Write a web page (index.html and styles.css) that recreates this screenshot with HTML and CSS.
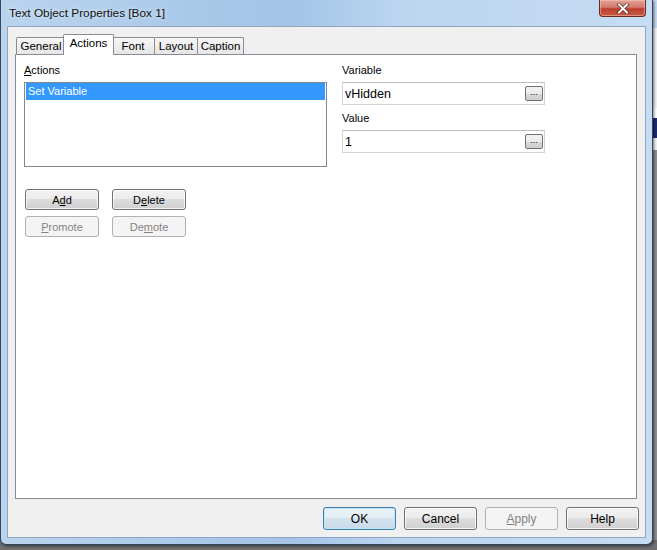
FILE: index.html
```html
<!DOCTYPE html>
<html>
<head>
<meta charset="utf-8">
<title>Text Object Properties [Box 1]</title>
<link rel="stylesheet" href="styles.css">
</head>
<body>
<div class="backdrop"></div>
<div class="window">
  <div class="titlebar">
    <div class="title">Text Object Properties [Box 1]</div>
    <div class="close">
      <svg width="14" height="11" viewBox="0 0 14 11">
        <path d="M3 1.5 L11 9.5 M11 1.5 L3 9.5" stroke="#5a2318" stroke-width="3.4" stroke-linecap="square" fill="none"/>
        <path d="M3 1.5 L11 9.5 M11 1.5 L3 9.5" stroke="#ffffff" stroke-width="2" stroke-linecap="square" fill="none"/>
      </svg>
    </div>
  </div>
  <div class="client">
    <div class="tabs">
      <div class="tab tab--general">General</div>
      <div class="tab tab--actions tab--active">Actions</div>
      <div class="tab tab--font">Font</div>
      <div class="tab tab--layout">Layout</div>
      <div class="tab tab--caption">Caption</div>
    </div>
    <div class="panel">
      <div class="col-left">
        <div class="label"><u>A</u>ctions</div>
        <div class="listbox">
          <div class="list-item list-item--selected">Set Variable</div>
        </div>
        <div class="btn-row btn-row--first">
          <div class="btn">A<u>d</u>d</div>
          <div class="btn">D<u>e</u>lete</div>
        </div>
        <div class="btn-row">
          <div class="btn btn--disabled"><u>P</u>romote</div>
          <div class="btn btn--disabled">De<u>m</u>ote</div>
        </div>
      </div>
      <div class="col-right">
        <div class="label">Variable</div>
        <div class="field field--spaced">
          <span class="field-text">vHidden</span>
          <span class="dots">...</span>
        </div>
        <div class="label">Value</div>
        <div class="field">
          <span class="field-text">1</span>
          <span class="dots">...</span>
        </div>
      </div>
    </div>
    <div class="footer">
      <div class="btn btn--footer btn--default">OK</div>
      <div class="btn btn--footer">Cancel</div>
      <div class="btn btn--footer btn--disabled"><u>A</u>pply</div>
      <div class="btn btn--footer">Help</div>
    </div>
  </div>
</div>
</body>
</html>
```
FILE: styles.css
```css
* { box-sizing: border-box; }
html, body { margin: 0; padding: 0; }
body {
  width: 657px;
  height: 550px;
  overflow: hidden;
  background: #6f6f6f;
  font-family: "Liberation Sans", Arial, sans-serif;
  font-size: 11px;
  color: #000;
  position: relative;
}
.backdrop {
  position: absolute;
  left: 600px;
  top: 0;
  width: 57px;
  height: 550px;
  background: linear-gradient(#c4daf0 0 28px, #f2f2f2 28px 108px, #ffffff 108px 118px, #1b2a6e 118px 138px, #f2f2f2 138px 150px, #8e8e8e 150px 540px, #6f6f6f 540px);
}
.window {
  position: relative;
  width: 653px;
  height: 545px;
  border: 1px solid #33465c;
  border-top: 0;
  border-radius: 0 0 6px 6px;
  padding: 0 6px 6px 6px;
  background: linear-gradient(90deg, #bad4ee 0%, #a9c8e8 30%, #a4c4e6 45%, #bcd6f0 62%, #c5dcf2 100%);
  display: flex;
  flex-direction: column;
  box-shadow: 1px 1px 3px rgba(0, 0, 0, 0.55);
}
.titlebar {
  height: 26px;
  display: flex;
  align-items: flex-start;
  flex-shrink: 0;
}
.title {
  padding: 6px 0 0 2px;
  font-size: 11.8px;
  line-height: 14px;
  color: #111;
  text-shadow: 0 0 5px rgba(255, 255, 255, 0.8);
}
.close {
  margin-left: auto;
  width: 47px;
  height: 17px;
  border: 1px solid #6b2a20;
  border-top: 0;
  border-radius: 0 0 4px 4px;
  background: linear-gradient(#e3a398 0%, #d27a6a 45%, #bc3f2e 55%, #c95a45 100%);
  display: flex;
  align-items: center;
  justify-content: center;
  box-shadow: inset 0 0 0 1px rgba(255, 200, 190, 0.5);
}
.client {
  flex: 1;
  border: 1px solid #8fa6c0;
  background: #f0f0f0;
  padding: 7px 8px 0 7px;
  display: flex;
  flex-direction: column;
}
.tabs {
  height: 20px;
  display: flex;
  align-items: flex-end;
  padding-left: 1px;
  flex-shrink: 0;
}
.tab {
  height: 17px;
  border: 1px solid #898c95;
  border-bottom: 0;
  border-radius: 2px 2px 0 0;
  background: linear-gradient(#f6f6f6, #e6e6e6);
  line-height: 16px;
  text-align: center;
  margin-right: -1px;
  color: #000;
  font-size: 11.5px;
}
.tab--general { width: 50px; }
.tab--actions { width: 51px; }
.tab--font { width: 44px; }
.tab--layout { width: 44px; }
.tab--caption { width: 47px; }
.tab--active {
  height: 21px;
  margin: 0 -3px -1px -2px;
  background: #ffffff;
  line-height: 17px;
  position: relative;
  z-index: 1;
}
.panel {
  flex: 1;
  border: 1px solid #898c95;
  background: #ffffff;
  padding: 8px 0 0 8px;
  display: flex;
}
.col-left {
  width: 303px;
}
.col-right {
  width: 203px;
  margin-left: 15px;
}
.label {
  height: 14px;
  line-height: 14px;
  margin-bottom: 5px;
}
.listbox {
  height: 85px;
  border: 1px solid #828790;
  padding: 0 1px;
  background: #fff;
}
.list-item {
  height: 17px;
  line-height: 17px;
  padding-left: 2px;
}
.list-item--selected {
  background: #3399ff;
  color: #fff;
}
.btn-row {
  display: flex;
  gap: 13px;
  margin-top: 6px;
  padding-left: 1px;
}
.btn-row--first { margin-top: 22px; }
.btn {
  width: 74px;
  height: 21px;
  border: 1px solid #707070;
  border-radius: 3px;
  background: linear-gradient(#f2f2f2 0%, #ebebeb 50%, #dddddd 50%, #cfcfcf 100%);
  box-shadow: inset 0 0 0 1px rgba(255, 255, 255, 0.75);
  display: flex;
  align-items: center;
  justify-content: center;
  color: #000;
}
.btn--disabled {
  border-color: #adb2b5;
  background: #f4f4f4;
  box-shadow: none;
  color: #838383;
}
.btn--footer {
  width: 73px;
  height: 23px;
  font-size: 12px;
}
.btn--default {
  border-color: #3c7fb1;
  box-shadow: inset 0 0 0 1px #bfe5f8;
  background: linear-gradient(#eaf3f9 0%, #e2edf5 50%, #d3e2ee 50%, #c9dae8 100%);
}
.field {
  height: 23px;
  border: 1px solid #d2d4d8;
  border-top-color: #b9bcc2;
  display: flex;
  align-items: center;
  padding: 0 1px 0 2px;
  margin-bottom: 6px;
}
.field-text {
  flex: 1;
  font-size: 12.5px;
}
.dots {
  width: 18px;
  height: 15px;
  border: 1px solid #707070;
  border-radius: 2px;
  background: linear-gradient(#f3f3f3 0%, #e9e9e9 50%, #d9d9d9 51%, #cdcdcd 100%);
  font-size: 9px;
  line-height: 11px;
  text-align: center;
  color: #000;
}
.footer {
  height: 38px;
  flex-shrink: 0;
  display: flex;
  justify-content: flex-end;
  gap: 8px;
  padding: 8px 0 0 0;
  margin-right: -2px;
}
```
